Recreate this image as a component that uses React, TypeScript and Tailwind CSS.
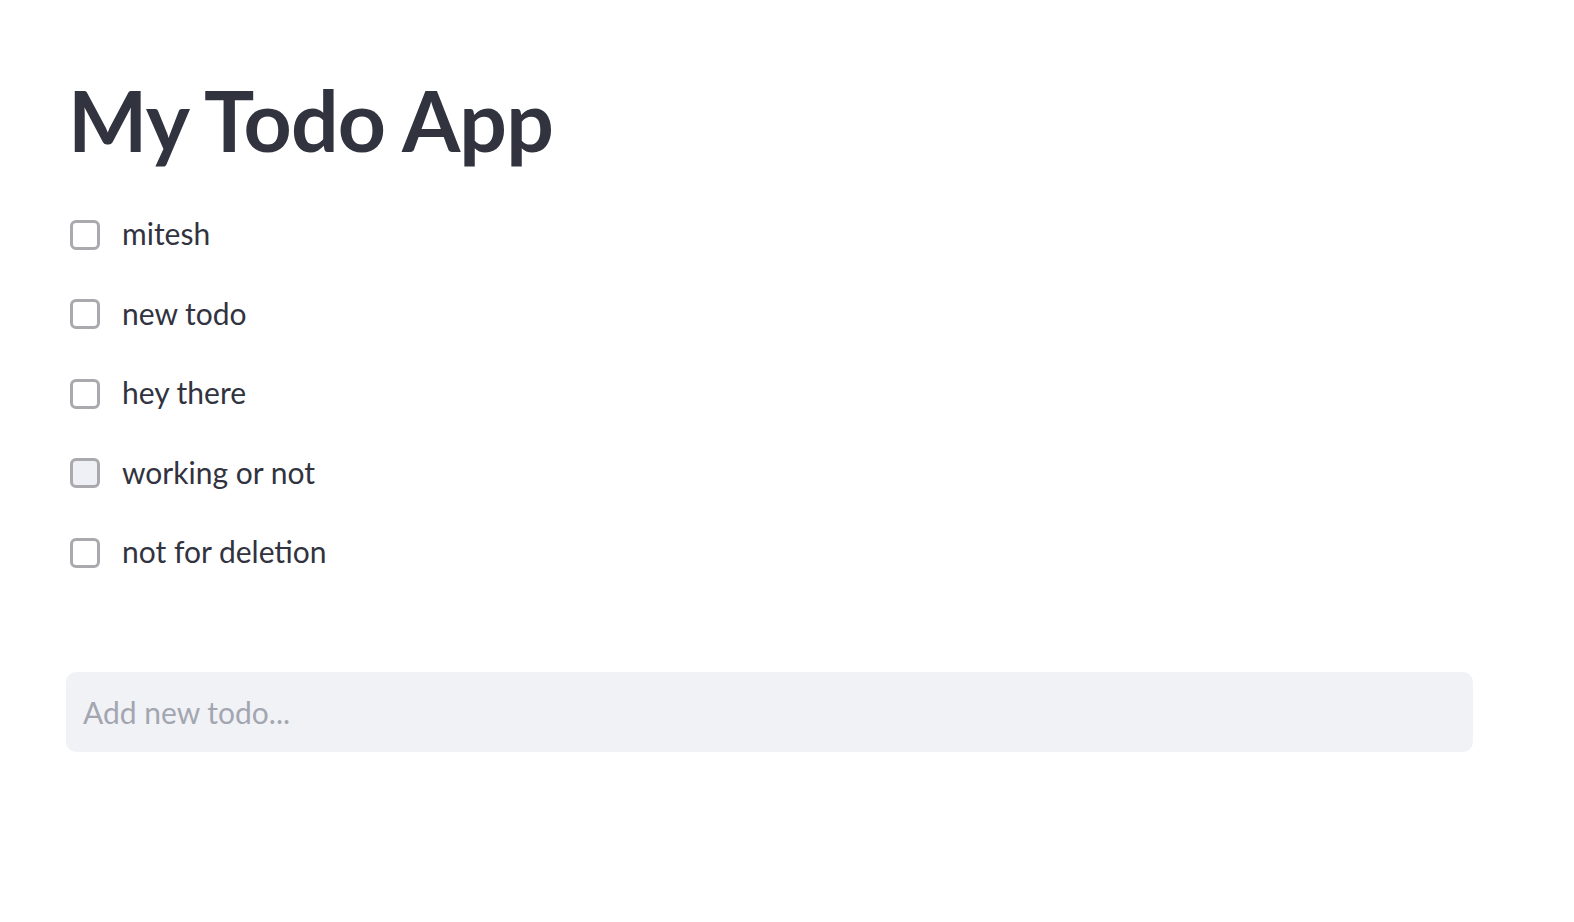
import { useState } from "react";

const todos = [
  { id: 1, text: "mitesh" },
  { id: 2, text: "new todo" },
  { id: 3, text: "hey there" },
  { id: 4, text: "working or not" },
  { id: 5, text: "not for deletion" },
];

const Checkbox = ({ hovered }: { hovered?: boolean }) => (
  <span
    className={
      "block w-[30px] h-[30px] rounded-[6px] border-[3px] border-[#a9a9ae] " +
      (hovered ? "bg-[#eef0f5]" : "bg-white")
    }
  />
);

export default function App() {
  const [value, setValue] = useState("");

  return (
    <div className="min-h-screen bg-white font-['Lato',sans-serif] text-[#31333f]">
      <div className="pl-[66px] pr-[101px] pt-[70px]">
        <h1 className="text-[84px] font-bold leading-[1.2] tracking-[-0.01em] pl-[2px]">
          My Todo App
        </h1>
        <div className="mt-[24px] flex flex-col">
          {todos.map((todo) => (
            <label
              key={todo.id}
              className="flex items-center h-[79.6px] pl-[4px] gap-[22px] cursor-pointer"
            >
              <Checkbox hovered={todo.id === 4} />
              <span className="text-[30px] leading-none pb-[3px]">{todo.text}</span>
            </label>
          ))}
        </div>
        <input
          value={value}
          onChange={(e) => setValue(e.target.value)}
          placeholder="Add new todo..."
          className="mt-[79px] w-full h-[80px] rounded-[10px] bg-[#f0f2f6] px-[17px] text-[30px] outline-none placeholder:text-[#a3a6b0]"
        />
      </div>
    </div>
  );
}
